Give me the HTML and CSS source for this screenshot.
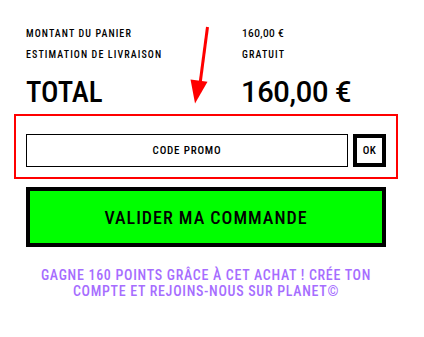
FILE: index.html
```html
<!DOCTYPE html>
<html lang="fr">
<head>
<meta charset="utf-8">
<title>Panier</title>
<link rel="stylesheet" href="styles.css">
</head>
<body>
<div class="page">
  <div class="summary">
    <div class="row">
      <span class="label">MONTANT DU PANIER</span>
      <span class="value num">160,00 €</span>
    </div>
    <div class="row">
      <span class="label">ESTIMATION DE LIVRAISON</span>
      <span class="value">GRATUIT</span>
    </div>
    <div class="row total">
      <span class="label">TOTAL</span>
      <span class="value num">160,00 €</span>
    </div>
  </div>

  <div class="promo-highlight">
    <form class="promo">
      <input class="promo-input" type="text" placeholder="CODE PROMO">
      <button class="promo-ok" type="button">OK</button>
    </form>
  </div>

  <button class="checkout" type="button">VALIDER MA COMMANDE</button>

  <p class="loyalty">GAGNE 160 POINTS GRÂCE À CET ACHAT ! CRÉE TON COMPTE ET REJOINS-NOUS SUR PLANET©</p>

  <svg class="arrow" width="424" height="337" viewBox="0 0 424 337" aria-hidden="true">
    <line x1="207.5" y1="27" x2="200" y2="84" stroke="#ff0000" stroke-width="3"/>
    <polygon points="190.5,79.5 207.5,81.8 195,103.5" fill="#ff0000"/>
  </svg>
</div>
</body>
</html>
```

FILE: styles.css
```css
* {
  box-sizing: border-box;
}

body {
  margin: 0;
  background: #ffffff;
  color: #000000;
  font-family: "Roboto", "Liberation Sans", sans-serif;
}

.page {
  position: relative;
  width: 424px;
  height: 337px;
  padding: 23px 0 0 14px;
  overflow: hidden;
}

.summary {
  padding-left: 12px;
}

.row {
  display: grid;
  grid-template-columns: 216px auto;
  font-size: 10px;
  line-height: 21px;
  font-weight: 500;
  font-stretch: 82%;
  letter-spacing: 1.1px;
}

.row .num {
  font-stretch: 100%;
  letter-spacing: 0.4px;
}

.row.total {
  margin-top: 10px;
  font-size: 29px;
  line-height: 34px;
  letter-spacing: 0;
}

.row.total .num {
  letter-spacing: -0.3px;
  margin-left: -1px;
}

.promo-highlight {
  margin-top: 5px;
  width: 384px;
  border: 2px solid #ff0000;
  padding: 18px 10px 10px 10px;
}

.promo {
  display: flex;
  gap: 5px;
  margin: 0;
}

.promo-input {
  width: 322px;
  height: 33px;
  border: 1px solid #000000;
  border-radius: 0;
  padding: 0;
  background: #ffffff;
  font-family: inherit;
  font-size: 11px;
  font-weight: 500;
  font-stretch: 82%;
  letter-spacing: 0.8px;
  text-align: center;
  color: #000000;
}

.promo-input::placeholder {
  color: #000000;
  opacity: 1;
}

.promo-ok {
  width: 33px;
  height: 33px;
  border: 4px solid #000000;
  border-radius: 0;
  padding: 0;
  background: #ffffff;
  font-family: inherit;
  font-size: 11px;
  font-weight: 500;
  font-stretch: 82%;
  letter-spacing: 0.5px;
  color: #000000;
}

.checkout {
  display: block;
  margin: 8px 0 0 12px;
  width: 360px;
  height: 60px;
  border: 4px solid #000000;
  border-radius: 0;
  background: #00ff00;
  color: #000000;
  font-family: inherit;
  font-size: 18px;
  font-weight: 500;
  font-stretch: 82%;
  letter-spacing: 1px;
  padding: 0;
}

.loyalty {
  margin: 20px 0 0 12px;
  width: 360px;
  text-align: center;
  font-weight: 500;
  font-stretch: 85%;
  font-size: 14px;
  line-height: 16px;
  letter-spacing: 0.7px;
  color: #a66dff;
}

.arrow {
  position: absolute;
  left: 0;
  top: 0;
  pointer-events: none;
}
```
